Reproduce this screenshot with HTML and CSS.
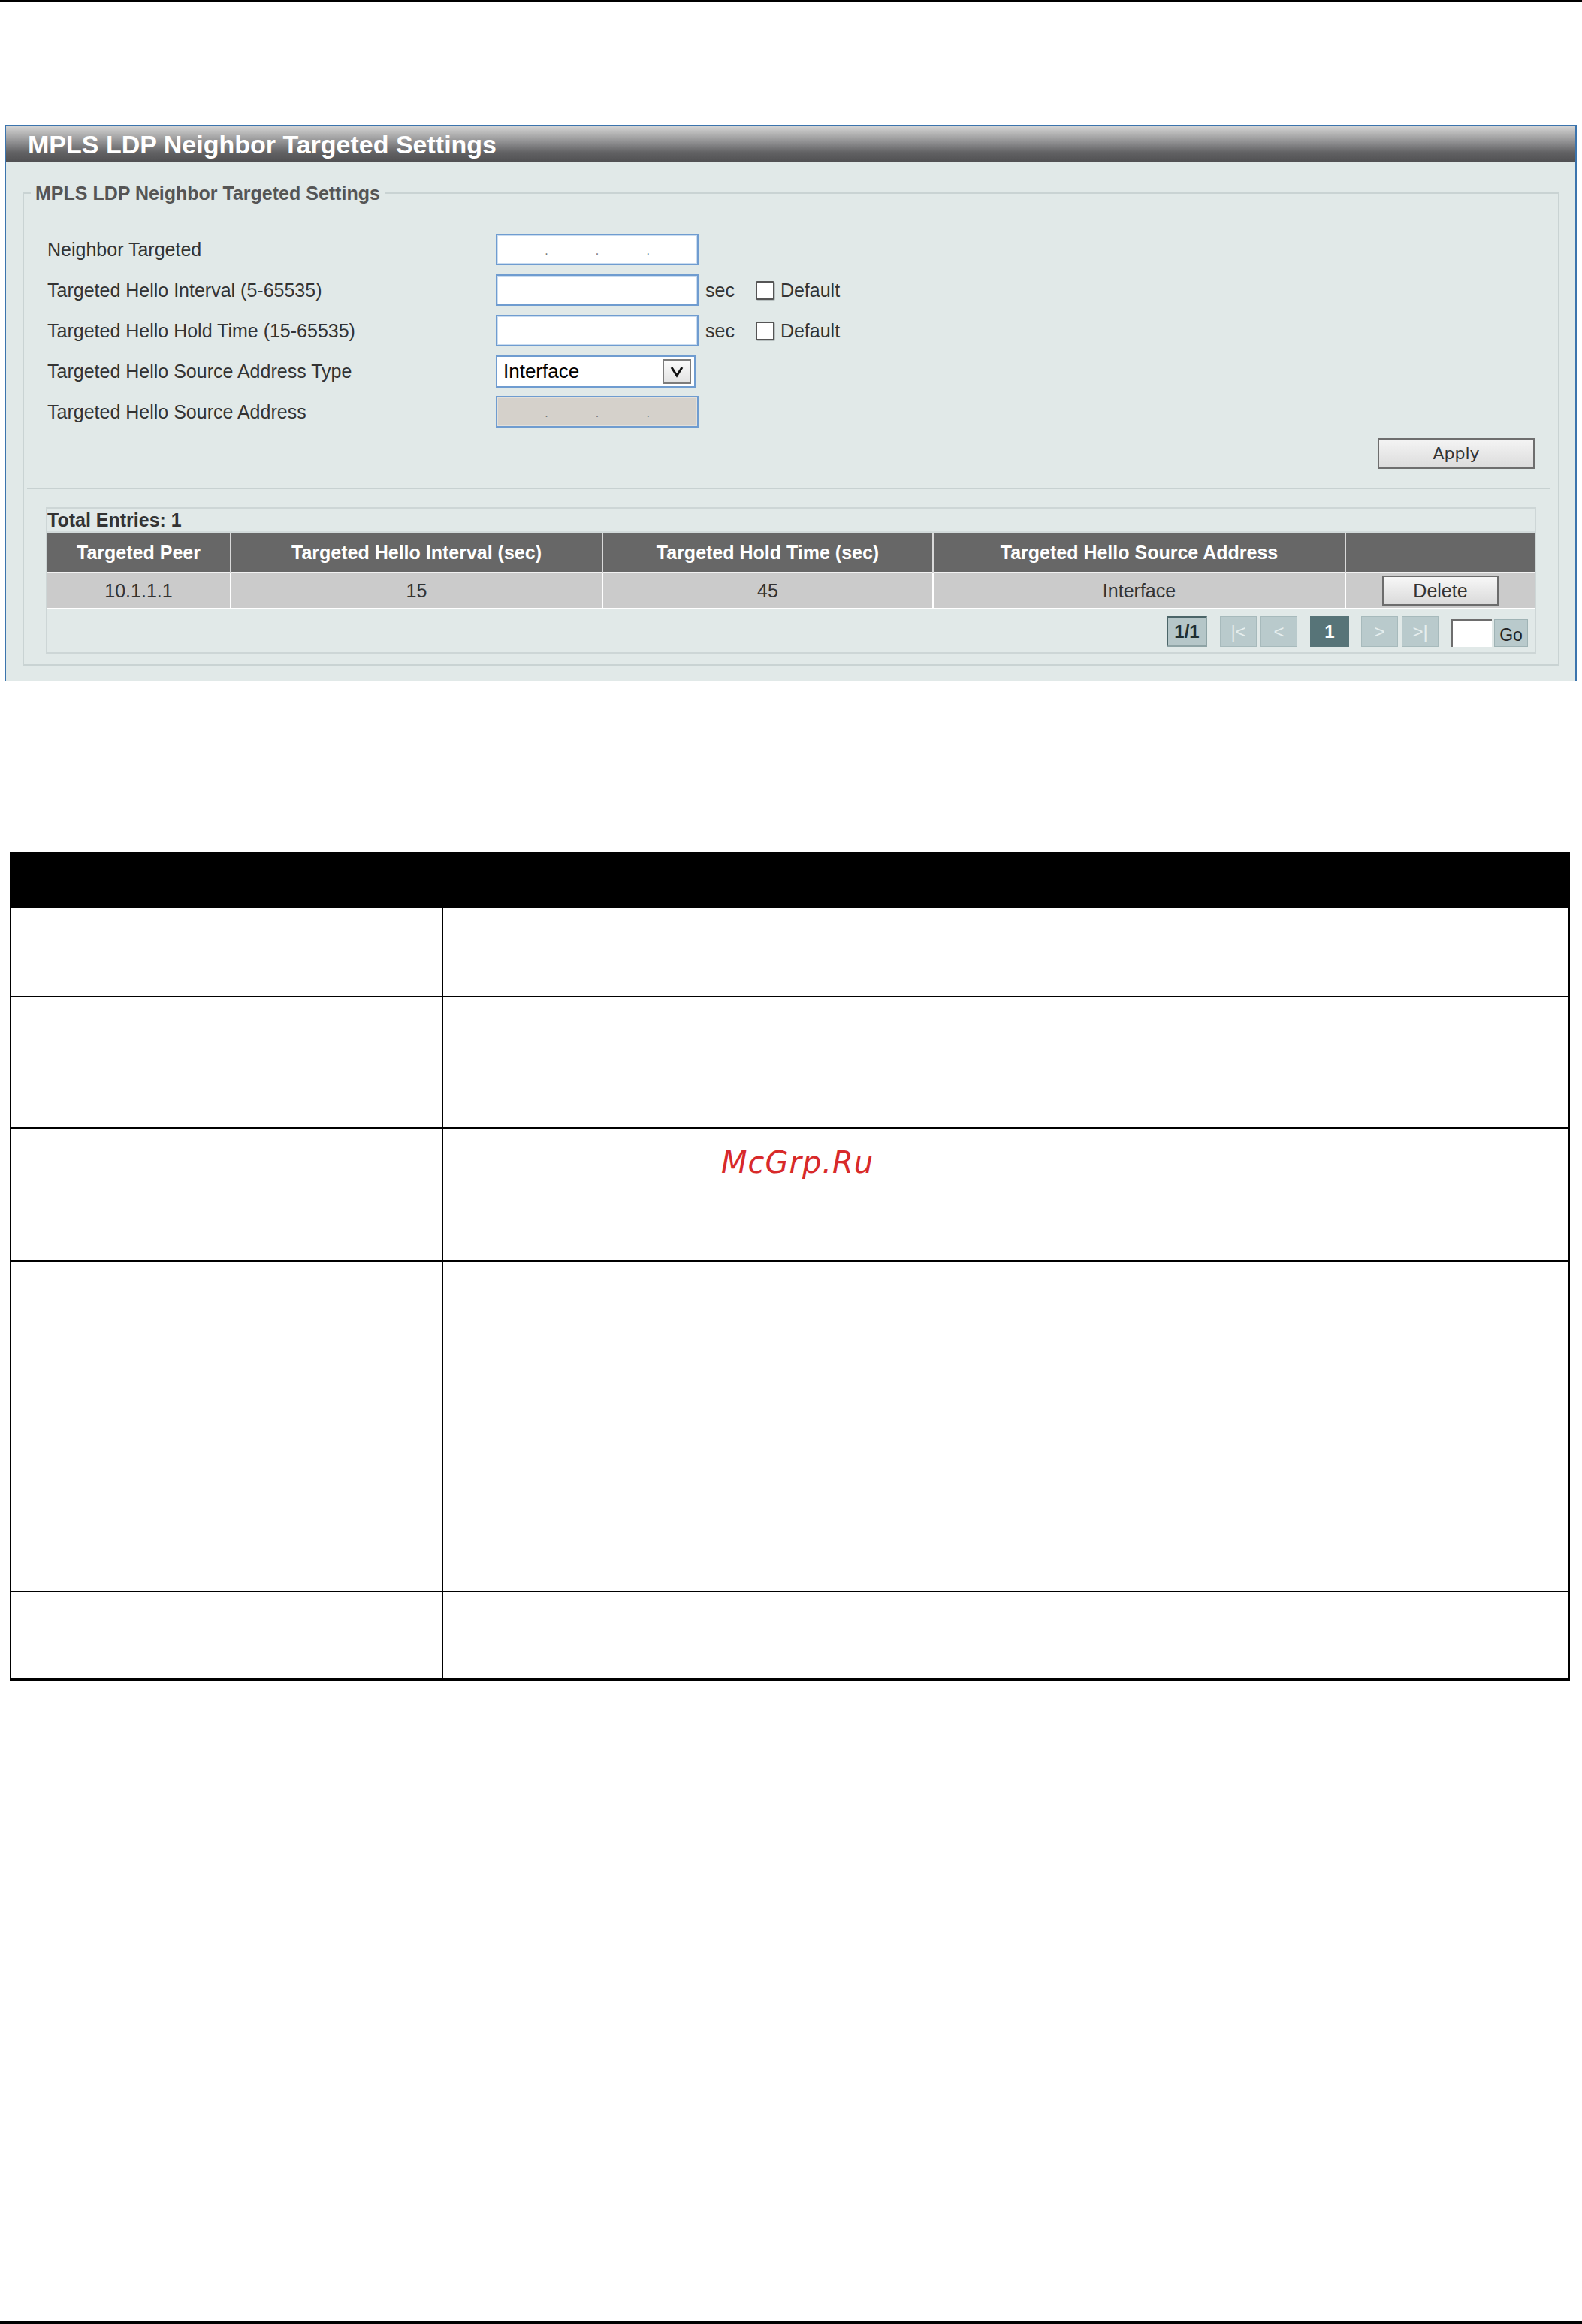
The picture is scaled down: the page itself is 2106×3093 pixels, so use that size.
FILE: index.html
```html
<!DOCTYPE html>
<html>
<head>
<meta charset="utf-8">
<title>MPLS LDP Neighbor Targeted Settings</title>
<link rel="stylesheet" href="styles.css">
</head>
<body>
<div class="page">
  <div class="rule-top"></div>

  <div class="panel">
    <div class="panel-head">MPLS LDP Neighbor Targeted Settings</div>
    <div class="panel-body">
      <fieldset class="group">
        <legend class="group-title">MPLS LDP Neighbor Targeted Settings</legend>
        <div class="form">
          <div class="row">
            <div class="label">Neighbor Targeted</div>
            <div class="input ip"><span></span><i>.</i><span></span><i>.</i><span></span><i>.</i><span></span></div>
          </div>
          <div class="row">
            <div class="label">Targeted Hello Interval (5-65535)</div>
            <div class="input"></div>
            <span class="unit">sec</span>
            <span class="check"></span>
            <span class="check-label">Default</span>
          </div>
          <div class="row">
            <div class="label">Targeted Hello Hold Time (15-65535)</div>
            <div class="input"></div>
            <span class="unit">sec</span>
            <span class="check"></span>
            <span class="check-label">Default</span>
          </div>
          <div class="row">
            <div class="label">Targeted Hello Source Address Type</div>
            <div class="select">
              <span class="select-text">Interface</span>
              <span class="select-arrow"><svg width="34" height="29" viewBox="0 0 34 29"><polyline points="10,9 17,20 24,9" fill="none" stroke="#111" stroke-width="3"/></svg></span>
            </div>
          </div>
          <div class="row">
            <div class="label">Targeted Hello Source Address</div>
            <div class="input ip disabled"><span></span><i>.</i><span></span><i>.</i><span></span><i>.</i><span></span></div>
          </div>
        </div>
        <div class="actions">
          <button class="btn-apply">Apply</button>
        </div>
        <div class="sep"></div>
        <div class="grid-box">
          <div class="entries">Total Entries: 1</div>
          <table class="data">
            <colgroup>
              <col class="c1"><col class="c2"><col class="c3"><col class="c4"><col class="c5">
            </colgroup>
            <thead>
              <tr>
                <th>Targeted Peer</th>
                <th>Targeted Hello Interval (sec)</th>
                <th>Targeted Hold Time (sec)</th>
                <th>Targeted Hello Source Address</th>
                <th></th>
              </tr>
            </thead>
            <tbody>
              <tr>
                <td>10.1.1.1</td>
                <td>15</td>
                <td>45</td>
                <td>Interface</td>
                <td><button class="btn-del">Delete</button></td>
              </tr>
            </tbody>
          </table>
          <div class="pager">
            <span class="pg pg-info">1/1</span>
            <span class="pg pg-dis pg-gap">|&lt;</span>
            <span class="pg pg-dis pg-near">&lt;</span>
            <span class="pg pg-cur pg-gap">1</span>
            <span class="pg pg-dis pg-gap2">&gt;</span>
            <span class="pg pg-dis pg-near">&gt;|</span>
            <span class="pg-input pg-gap"></span>
            <span class="pg pg-go">Go</span>
          </div>
        </div>
      </fieldset>
    </div>
  </div>

  <table class="doc">
    <colgroup><col class="d1"><col class="d2"></colgroup>
    <thead><tr class="dh"><th></th><th></th></tr></thead>
    <tbody>
      <tr class="r1"><td></td><td></td></tr>
      <tr class="r2"><td></td><td></td></tr>
      <tr class="r3"><td></td><td></td></tr>
      <tr class="r4"><td></td><td></td></tr>
      <tr class="r5"><td></td><td></td></tr>
    </tbody>
  </table>

  <div class="watermark">McGrp.Ru</div>

  <div class="rule-bottom"></div>
</div>
</body>
</html>
```
FILE: styles.css
```css
html, body {
  margin: 0;
  padding: 0;
  background: #fff;
}
body {
  font-family: "Liberation Sans", Arial, sans-serif;
  color: #333;
}
.page {
  width: 2106px;
  height: 3093px;
  display: flex;
  flex-direction: column;
  position: relative;
}
.rule-top {
  flex: none;
  height: 3px;
  background: #000;
}
.rule-bottom {
  flex: none;
  margin-top: auto;
  height: 4px;
  background: #000;
}

/* ---------- panel ---------- */
.panel {
  flex: none;
  margin: 164px 0 0 6px;
  width: 2094px;
  box-sizing: border-box;
  border-top: 1px solid #3b74ad;
  border-left: 2px solid #3b74ad;
  border-right: 3px solid #3b74ad;
  background: #e1e9e8;
}
.panel-head {
  height: 48px;
  box-sizing: border-box;
  padding-left: 29px;
  line-height: 48px;
  font-size: 34px;
  font-weight: bold;
  color: #fff;
  background: linear-gradient(to bottom, #d4d4d4 0%, #b3b3b3 22%, #8a8a8c 48%, #626264 74%, #515153 100%);
  border-bottom: 1px solid #a7a9a9;
  white-space: nowrap;
  overflow: hidden;
}
.panel-body {
  padding: 26px 21px 20px 22px;
}
.group {
  margin: 0;
  padding: 39px 31px 14px 31px;
  border: 2px solid #c9d3d3;
  min-width: 0;
}
.group-title {
  margin-left: -22px;
  padding: 0 6px;
  font-size: 25px;
  line-height: 30px;
  font-weight: bold;
  color: #555;
}

/* ---------- form ---------- */
.form {
  display: flex;
  flex-direction: column;
  gap: 12px;
}
.row {
  display: flex;
  align-items: center;
  height: 42px;
}
.label {
  flex: none;
  width: 597px;
  font-size: 25px;
  color: #333;
  white-space: nowrap;
}
.input {
  flex: none;
  width: 270px;
  height: 42px;
  box-sizing: border-box;
  border: 2px solid #6f9cd0;
  box-shadow: inset 0 0 0 1px #c9dcf0;
  background: #fff;
}
.input.disabled {
  background: #d5d1cb;
  box-shadow: inset 0 0 0 1px #e3e0da;
}
.ip {
  display: grid;
  grid-template-columns: 1fr auto 1fr auto 1fr auto 1fr;
  align-items: center;
}
.ip i {
  font-style: normal;
  font-size: 16px;
  line-height: 16px;
  color: #777;
  padding-top: 4px;
}
.unit {
  margin-left: 9px;
  font-size: 25px;
  color: #333;
}
.check {
  flex: none;
  width: 25px;
  height: 25px;
  margin-left: 28px;
  box-sizing: border-box;
  border: 2px solid #555;
  border-radius: 2px;
  background: #fff;
  box-shadow: 1px 1px 0 #b8c0c0;
}
.check-label {
  margin-left: 8px;
  font-size: 25px;
  color: #333;
}
.select {
  flex: none;
  width: 266px;
  height: 43px;
  box-sizing: border-box;
  border: 2px solid #6f9cd0;
  background: #fff;
  display: flex;
  align-items: center;
  justify-content: space-between;
  padding-left: 8px;
  padding-right: 4px;
}
.select-text {
  font-size: 26px;
  color: #000;
}
.select-arrow {
  width: 38px;
  height: 33px;
  box-sizing: border-box;
  border: 2px solid #7c7c7c;
  background: linear-gradient(to bottom, #fbfbfb, #e3e3e3);
  display: flex;
  align-items: center;
  justify-content: center;
}
.actions {
  display: flex;
  justify-content: flex-end;
  margin-top: 14px;
}
.btn-apply {
  width: 209px;
  height: 41px;
  box-sizing: border-box;
  border: 2px solid #6e6e6e;
  background: linear-gradient(to bottom, #f4f4f4, #dcdcdc);
  font-family: "DejaVu Sans", Verdana, sans-serif;
  font-size: 22px;
  color: #333;
  padding: 0;
  margin: 0;
}
.sep {
  height: 2px;
  background: #c7d1d1;
  margin: 25px -21px 0 -27px;
}

/* ---------- grid ---------- */
.grid-box {
  margin: 24px -2px 0 -2px;
  border: 2px solid #cdd6d6;
}
.entries {
  height: 30px;
  line-height: 30px;
  font-size: 25px;
  font-weight: bold;
  color: #333;
  border-bottom: 2px solid #d3dbdb;
}
.data {
  width: 100%;
  border-collapse: collapse;
  table-layout: fixed;
}
.data .c1 { width: 244px; }
.data .c2 { width: 495px; }
.data .c3 { width: 440px; }
.data .c4 { width: 549px; }
.data .c5 { width: 252px; }
.data th {
  height: 52px;
  padding: 0;
  background: #676767;
  color: #fff;
  font-size: 25px;
  font-weight: bold;
  border-right: 2px solid #d9d9d9;
  white-space: nowrap;
}
.data th:last-child,
.data td:last-child { border-right: none; }
.data td {
  height: 46px;
  padding: 0;
  background: #cbcbcb;
  text-align: center;
  font-size: 25px;
  color: #333;
  border-right: 2px solid #fff;
  border-top: 2px solid #f2f2f2;
  border-bottom: 2px solid #fff;
}
.btn-del {
  display: block;
  margin: 0 auto;
  width: 155px;
  height: 40px;
  box-sizing: border-box;
  border: 2px solid #6c6c6c;
  background: linear-gradient(to bottom, #f7f7f7, #dadada);
  font-family: "Liberation Sans", Arial, sans-serif;
  font-size: 25px;
  color: #333;
  padding: 0;
}
.pager {
  display: flex;
  justify-content: flex-end;
  align-items: flex-end;
  padding: 9px 9px 7px 0;
}
.pg {
  height: 41px;
  box-sizing: border-box;
  display: flex;
  align-items: center;
  justify-content: center;
  font-size: 24px;
}
.pg-info {
  width: 54px;
  background: #b5c6c8;
  border: 2px solid #8ea3a5;
  border-top-color: #4b6568;
  border-left-color: #4b6568;
  color: #1f2d2f;
  font-weight: bold;
}
.pg-dis {
  width: 49px;
  background: #b9cacc;
  border: 1px solid #a7babc;
  color: #e6eeee;
}
.pg-cur {
  width: 52px;
  background: #577478;
  color: #fff;
  font-weight: bold;
}
.pg-gap { margin-left: 17px; }
.pg-gap2 { margin-left: 16px; }
.pg-near { margin-left: 5px; }
.pg-input {
  width: 54px;
  height: 37px;
  box-sizing: border-box;
  background: #fff;
  border-top: 2px solid #6d6d6d;
  border-left: 2px solid #6d6d6d;
}
.pg-go {
  width: 45px;
  height: 37px;
  margin-left: 3px;
  background: #b9cacc;
  border: 1px solid #9fb3b5;
  color: #222;
  font-size: 23px;
  padding-top: 6px;
}

/* ---------- description table ---------- */
.doc {
  flex: none;
  margin: 228px 0 0 13px;
  width: 2074px;
  border-collapse: collapse;
  table-layout: fixed;
  border-left: 2px solid #000;
  border-right: 3px solid #000;
  border-bottom: 4px solid #000;
}
.doc .d1 { width: 575px; }
.doc .d2 { width: 1499px; }
.doc th, .doc td {
  padding: 0;
  border-top: 2px solid #000;
  border-left: 2px solid #000;
}
.doc .dh th {
  height: 70px;
  background: #000;
}
.doc .r1 td { height: 117px; }
.doc .r2 td { height: 173px; }
.doc .r3 td { height: 175px; }
.doc .r4 td { height: 438px; }
.doc .r5 td { height: 114px; }

.watermark {
  position: absolute;
  left: 960px;
  top: 1523px;
  font-family: "DejaVu Sans", sans-serif;
  font-style: italic;
  font-size: 40px;
  line-height: 48px;
  color: #d82a2a;
  letter-spacing: 1px;
}
```
